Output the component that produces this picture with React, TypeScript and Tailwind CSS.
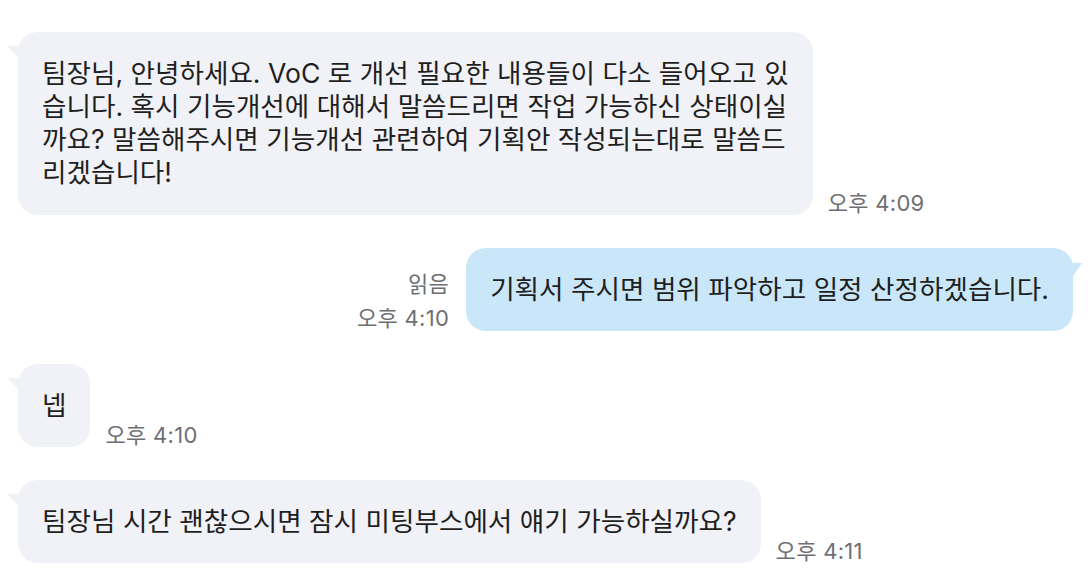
const font = { fontFamily: 'Inter, "Noto Sans CJK KR", "Noto Sans", sans-serif' };

function LeftTail() {
  return (
    <svg className="absolute left-[-11px] top-[14px]" width="16" height="16" viewBox="0 0 16 16">
      <polygon points="0,0 16,0 16,16" fill="#f1f2f7" />
    </svg>
  );
}

function RightTail() {
  return (
    <svg className="absolute right-[-9px] top-[15px]" width="16" height="16" viewBox="0 0 16 16">
      <polygon points="0,0 16,0 5,16 0,16" fill="#c9e7f8" />
    </svg>
  );
}

function Time({ children }: { children: React.ReactNode }) {
  return (
    <span className="text-[22px] leading-[24px] tracking-[0.3px] text-[#6e6e73] whitespace-nowrap">{children}</span>
  );
}

function Incoming({ lines, time }: { lines: string[]; time: string }) {
  const multi = lines.length > 1;
  return (
    <div className="flex items-end gap-[15px]">
      <div
        className={
          multi
            ? "relative rounded-[20px] bg-[#f1f2f7] px-6 pt-[25px] pb-[26px] text-[26.6px] leading-[33px] text-[#1f1f22]"
            : "relative rounded-[20px] bg-[#f1f2f7] px-6 py-[25px] text-[26.6px] leading-[33px] text-[#1f1f22]"
        }
      >
        <LeftTail />
        {lines.map((l, i) => (
          <div key={i} className="whitespace-nowrap">{l}</div>
        ))}
      </div>
      <Time>{time}</Time>
    </div>
  );
}

export default function App() {
  return (
    <div className="min-h-screen bg-white" style={font}>
      <div className="flex flex-col gap-[33px] pt-[32px] pl-[18px] pr-[17px]">
        <Incoming
          lines={[
            "팀장님, 안녕하세요. VoC 로 개선 필요한 내용들이 다소 들어오고 있",
            "습니다. 혹시 기능개선에 대해서 말씀드리면 작업 가능하신 상태이실",
            "까요? 말씀해주시면 기능개선 관련하여 기획안 작성되는대로 말씀드",
            "리겠습니다!",
          ]}
          time="오후 4:09"
        />

        <div className="flex items-end justify-end gap-[17px]">
          <div className="mb-[1px] flex flex-col items-end gap-[10px]">
            <Time>읽음</Time>
            <Time>오후 4:10</Time>
          </div>
          <div className="relative rounded-[20px] bg-[#c9e7f8] py-[25px] pl-6 pr-[24px] text-[26.6px] leading-[33px] text-[#1f1f22]">
            <RightTail />
            <div className="whitespace-nowrap">기획서 주시면 범위 파악하고 일정 산정하겠습니다.</div>
          </div>
        </div>

        <Incoming lines={["넵"]} time="오후 4:10" />

        <Incoming lines={["팀장님 시간 괜찮으시면 잠시 미팅부스에서 얘기 가능하실까요?"]} time="오후 4:11" />
      </div>
    </div>
  );
}
